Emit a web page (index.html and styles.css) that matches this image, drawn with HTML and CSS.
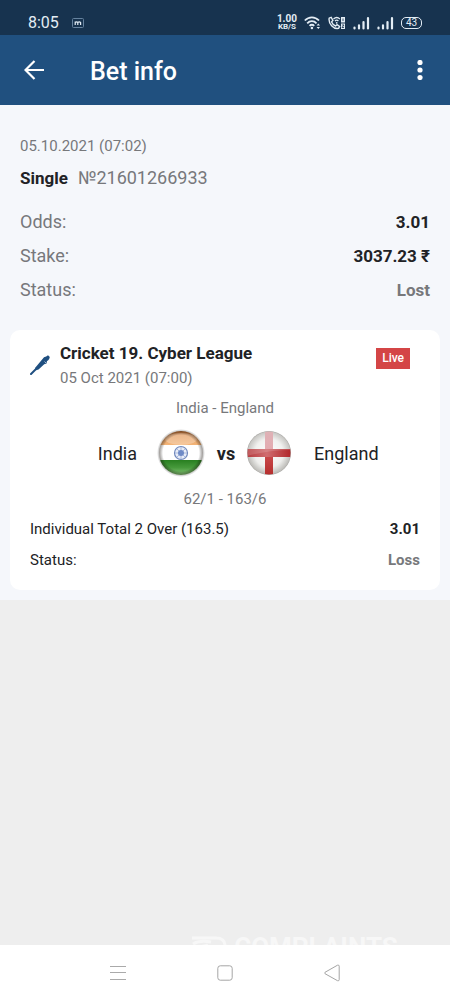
FILE: index.html
```html
<!DOCTYPE html>
<html lang="en">
<head>
<meta charset="utf-8">
<meta name="viewport" content="width=device-width, initial-scale=1">
<title>Bet info</title>
<link rel="stylesheet" href="styles.css">
</head>
<body>
<div class="screen">
  <div class="status-bar">
    <div class="status-left">
      <span class="clock">8:05</span>
      <svg class="app-badge" width="12" height="10" viewBox="0 0 12 10" fill="none"><rect x=".5" y=".5" width="11" height="9" rx="1" stroke="#66839f"/><path d="M3.2 7V3.5M3.2 4.5q1.300-1.300 2.600 0V7M5.800 4.500q1.500-1.300 2.800 0V7" stroke="#e3edf5" stroke-width="1.200"/></svg>
    </div>
    <div class="status-right">
      <span class="speed"><span class="speed-value">1.00</span><span class="speed-unit">KB/S</span></span>
      <svg class="wifi" width="17" height="14" viewBox="0 0 17 14" fill="none" stroke="#e3edf5" stroke-width="1.800"><path d="M.8 4.500C4.800.2 11 .2 15 4.500M3.200 7.300c2.700-2.800 6.700-2.800 9.300 0M5.600 9.800c1.300-1.400 3.300-1.400 4.600 0"/><circle cx="7.900" cy="12" r="1.300" fill="#e3edf5" stroke="none"/><path d="M12.600 9.500l1.700-2 1.700 2zM12.600 11l1.700 2 1.700-2z" fill="#e3edf5" stroke="none"/></svg>
      <svg class="call" width="18" height="14" viewBox="0 0 18 14" fill="none" stroke="#e3edf5"><path d="M1.200 2.200l2-.8 1.700 3-1.300 1.500c.8 2 2.200 3.300 4 4.100l1.500-1.300 2.500 1.700-1 2C5.500 13.400.2 7.500 1.200 2.200z" stroke-width="1.400"/><path d="M5.500 3c2-1.800 4.500-1.800 6.400 0M7 5c1-1 2.400-1 3.400 0" stroke-width="1.300"/><circle cx="8.700" cy="6.800" r=".9" fill="#e3edf5" stroke="none"/><path d="M13 1h4v5.500h-4zM13 7.500h4V13h-4z" fill="#e3edf5" stroke="none"/><path d="M15 2.500V5M14 9h2l-2 2.500h2" stroke="#17334f" stroke-width=".8"/></svg>
      <svg class="signal" width="17" height="14" viewBox="0 0 17 14" stroke="#e3edf5" stroke-width="2.200" stroke-linecap="round"><path d="M1.500 12.500v-1M6 12.500V9.300M10.500 12.500V6M15 12.500V2"/></svg>
      <svg class="signal" width="17" height="14" viewBox="0 0 17 14" stroke="#e3edf5" stroke-width="2.200" stroke-linecap="round"><path d="M1.500 12.500v-1M6 12.500V9.300M10.500 12.500V6M15 12.500V2"/></svg>
      <span class="battery">43</span>
    </div>
  </div>

  <header class="app-bar">
    <button class="icon-button" type="button" aria-label="Back"><svg width="20" height="20" viewBox="0 0 20 20" fill="none" stroke="#fff" stroke-width="2.200"><path d="M20 10H1.500M10.500 1L1.500 10l9 9"/></svg></button>
    <h1 class="title">Bet info</h1>
    <button class="icon-button menu" type="button" aria-label="More options"><svg width="6" height="20" viewBox="0 0 6 20" fill="#fff"><circle cx="3" cy="2.500" r="2.600"/><circle cx="3" cy="10" r="2.600"/><circle cx="3" cy="17.500" r="2.600"/></svg></button>
  </header>

  <main class="content">
    <section class="summary">
      <p class="placed">05.10.2021 (07:02)</p>
      <p class="bet-id"><strong class="kind">Single</strong><span>№21601266933</span></p>
      <dl class="facts">
        <div class="fact"><dt>Odds:</dt><dd>3.01</dd></div>
        <div class="fact"><dt>Stake:</dt><dd>3037.23 ₹</dd></div>
        <div class="fact"><dt>Status:</dt><dd class="muted">Lost</dd></div>
      </dl>
    </section>

    <article class="card">
      <div class="card-head">
        <svg class="bat" width="20" height="20" viewBox="0 0 20 20" fill="none"><path d="M1 19L7 13" stroke="#1f4f80" stroke-width="2" stroke-linecap="round"/><path d="M5 13L14 2.200l2.200-.6L18 .3l1.800 1.800-.6 2-1.200 1.400-1 .6-.5 2.400-2.300.7L8.500 14.500l-2.500.8z" fill="#1f4f80"/><path d="M14.500 6.500l1.500 1.500" stroke="#fff" stroke-width=".6"/></svg>
        <div class="event">
          <h2 class="league">Cricket 19. Cyber League</h2>
          <p class="event-date">05 Oct 2021 (07:00)</p>
        </div>
        <span class="live">Live</span>
      </div>
      <p class="line">India - England</p>
      <div class="match">
        <div class="team home">
          <span class="team-name">India</span>
          <svg class="flag" width="48" height="48" viewBox="0 0 48 48" role="img" aria-label="Flag of India">
            <defs>
              <clipPath id="disc"><circle cx="24" cy="24" r="22"/></clipPath>
              <linearGradient id="saffron" x2="0" y2="1"><stop stop-color="#b8662a"/><stop offset=".3" stop-color="#e39c62"/><stop offset="1" stop-color="#f3b578"/></linearGradient>
              <linearGradient id="green" x2="0" y2="1"><stop stop-color="#287f20"/><stop offset=".5" stop-color="#46993b"/><stop offset="1" stop-color="#86c477"/></linearGradient>
              <radialGradient id="shade"><stop offset=".82" stop-color="#000" stop-opacity="0"/><stop offset="1" stop-color="#221a12" stop-opacity=".45"/></radialGradient>
              <radialGradient id="halo"><stop offset=".88" stop-color="#555" stop-opacity=".5"/><stop offset="1" stop-color="#555" stop-opacity="0"/></radialGradient>
            </defs>
            <circle cx="24" cy="24" r="24" fill="url(#halo)"/>
            <g clip-path="url(#disc)">
              <path fill="#fff" d="M0 0h48v48H0z"/>
              <path fill="url(#saffron)" d="M0 2h48v14H0z"/>
              <path fill="url(#green)" d="M0 31h48v15H0z"/>
              <ellipse cx="24" cy="10" rx="16" ry="6" fill="#fff" opacity=".28"/>
            </g>
            <circle cx="24" cy="24" r="6.500" fill="#e8edf8" stroke="#7189bd" stroke-width="1.200"/>
            <path d="M24 18v12M18 24h12M19.800 19.800l8.400 8.400M28.200 19.800l-8.400 8.400" stroke="#91a5d0" stroke-width=".7"/>
            <circle cx="24" cy="24" r="3" fill="#6e8ac6"/>
            <circle cx="24" cy="24" r="22" fill="url(#shade)"/>
          </svg>
        </div>
        <span class="versus">vs</span>
        <div class="team away">
          <svg class="flag small" width="44" height="44" viewBox="0 0 44 44" role="img" aria-label="Flag of England">
            <defs>
              <clipPath id="ball"><circle cx="22" cy="22" r="21.500"/></clipPath>
              <radialGradient id="pearl"><stop stop-color="#fff"/><stop offset=".65" stop-color="#eeeeec"/><stop offset="1" stop-color="#b8b7b3"/></radialGradient>
              <linearGradient id="upright" x2="0" y2="1"><stop stop-color="#d9a5aa"/><stop offset=".4" stop-color="#df9da3"/><stop offset=".56" stop-color="#c9494b"/><stop offset="1" stop-color="#b52e2d"/></linearGradient>
              <linearGradient id="crossbar"><stop stop-color="#b53a3e"/><stop offset=".45" stop-color="#d06d70"/><stop offset="1" stop-color="#b02529"/></linearGradient>
            </defs>
            <circle cx="22" cy="22" r="22" fill="#aaa9a6"/>
            <g clip-path="url(#ball)">
              <path fill="url(#pearl)" d="M0 0h44v44H0z"/>
              <path fill="url(#upright)" d="M18 0h8v44h-8z"/>
              <path fill="url(#crossbar)" d="M0 18h44v8H0z"/>
              <path fill="#fff" opacity=".15" d="M0 0h44v19Q22 19 0 25z"/>
            </g>
          </svg>
          <span class="team-name">England</span>
        </div>
      </div>
      <p class="line score">62/1 - 163/6</p>
      <dl class="results">
        <div class="result"><dt>Individual Total 2 Over (163.5)</dt><dd>3.01</dd></div>
        <div class="result"><dt>Status:</dt><dd class="muted">Loss</dd></div>
      </dl>
    </article>
  </main>

  <div class="watermark" aria-hidden="true">
    <svg width="36" height="22" viewBox="0 0 36 22" fill="none" stroke="#f7f7f7" stroke-width="3"><path d="M0 3h24c6 0 9 3 9 8s-3 9-9 9H10M1 9c5-3 12-3 18-2M4 13l12-3"/></svg>
    <span>COMPLAINTS</span>
  </div>

  <nav class="nav-bar" aria-label="System">
    <button class="nav-button" type="button" aria-label="Recent apps"><svg width="16" height="16" viewBox="0 0 16 16" stroke="#aaa"><path d="M0 1.500h16M0 7.500h16M0 14.500h16"/></svg></button>
    <button class="nav-button" type="button" aria-label="Home"><svg width="16" height="16" viewBox="0 0 16 16" fill="none" stroke="#a5a5a5"><rect x=".8" y=".8" width="14.400" height="14.400" rx="2.500"/></svg></button>
    <button class="nav-button" type="button" aria-label="Back"><svg width="16" height="18" viewBox="0 0 16 18" fill="none" stroke="#a5a5a5" stroke-linejoin="round"><path d="M1 8.300L13.500 1.200q1.700-.5 1.700 1v13.500q0 1.500-1.700 1L1 9.700q-.8-.7 0-1.400z"/></svg></button>
  </nav>
</div>
</body>
</html>
```
FILE: styles.css
```css
* { box-sizing: border-box; }
body {
  margin: 0;
  background: #eee;
  color: #212225;
  font-family: Roboto, "Noto Sans", sans-serif;
}
h1, h2, p, dl, dd { margin: 0; }
button { border: 0; padding: 0; background: none; cursor: pointer; }
svg { display: block; flex: none; }

.screen { display: flex; flex-direction: column; min-height: 100vh; }

.status-bar {
  display: flex;
  justify-content: space-between;
  align-items: center;
  height: 35px;
  padding: 10px 28px 0;
  background: #17334f;
  color: #e3edf5;
}
.status-left { display: flex; align-items: center; gap: 13px; }
.clock { font-size: 16px; line-height: 24px; }
.status-right { display: flex; align-items: center; gap: 7px; }
.speed { display: flex; flex-direction: column; align-items: center; font-weight: 700; }
.speed-value { font-size: 10px; line-height: 8px; }
.speed-unit { font-size: 8px; line-height: 8px; }
.battery {
  width: 21px;
  border: 1px solid #e3edf5;
  border-radius: 5px;
  font-size: 10px;
  line-height: 10px;
  text-align: center;
}

.app-bar {
  display: flex;
  align-items: center;
  height: 70px;
  padding: 0 20px 0 24px;
  background: #20507f;
  color: #fff;
}
.icon-button { display: flex; align-items: center; justify-content: center; height: 44px; }
.title { flex: 1; padding: 3px 0 0 46px; font-size: 25px; font-weight: 500; line-height: 30px; }
.menu { width: 20px; }

.content { padding: 30px 10px 10px; background: #f5f7fb; }
.summary { padding: 0 10px; color: #77787b; }
.placed { font-size: 15px; line-height: 22px; }
.bet-id { display: flex; gap: 10px; margin-top: 9px; font-size: 18px; line-height: 24px; }
.kind { color: #212225; font-size: 17px; }
.facts { margin-top: 15px; font-size: 18px; line-height: 34px; }
.fact, .result { display: flex; justify-content: space-between; }
dd { color: #212225; font-weight: 700; }
.fact dd { font-size: 17px; }
.muted, .fact .muted { color: #77787b; }

.card { margin-top: 23px; padding: 11px 20px 14px; border-radius: 10px; background: #fff; }
.card-head { display: flex; align-items: flex-start; gap: 10px; }
.bat { margin-top: 14px; }
.event { flex: 1; }
.league { font-size: 17px; font-weight: 700; line-height: 24px; }
.event-date, .line { color: #77787b; font-size: 15px; line-height: 24px; }
.event-date { margin-top: 1px; }
.live {
  margin: 7px 10px 0 0;
  padding: 0 6px;
  background: #d44546;
  color: #fff;
  font-size: 12px;
  font-weight: 500;
  line-height: 21px;
}
.line { margin-top: 6px; text-align: center; }
.match { display: flex; align-items: center; margin-top: 9px; padding-left: 2px; }
.team { display: flex; flex: 1; align-items: center; }
.home { justify-content: flex-end; gap: 20px; }
.away { gap: 23px; }
.team-name { padding-top: 2px; font-size: 18px; line-height: 24px; }
.versus { width: 42px; padding-top: 2px; font-size: 18px; font-weight: 700; line-height: 24px; text-align: center; }
.score { margin-top: 10px; }
.results { margin-top: 3px; font-size: 15px; line-height: 31px; }

.watermark {
  display: flex;
  align-items: flex-start;
  justify-content: center;
  gap: 6px;
  height: 10px;
  margin-top: auto;
  padding-left: 140px;
  overflow: hidden;
  color: #f7f7f7;
  font-size: 26px;
  font-weight: 700;
  line-height: 24px;
}
.nav-bar {
  display: flex;
  justify-content: center;
  gap: 91px;
  height: 55px;
  background: #fff;
}
.nav-button { display: flex; align-items: center; }
```
